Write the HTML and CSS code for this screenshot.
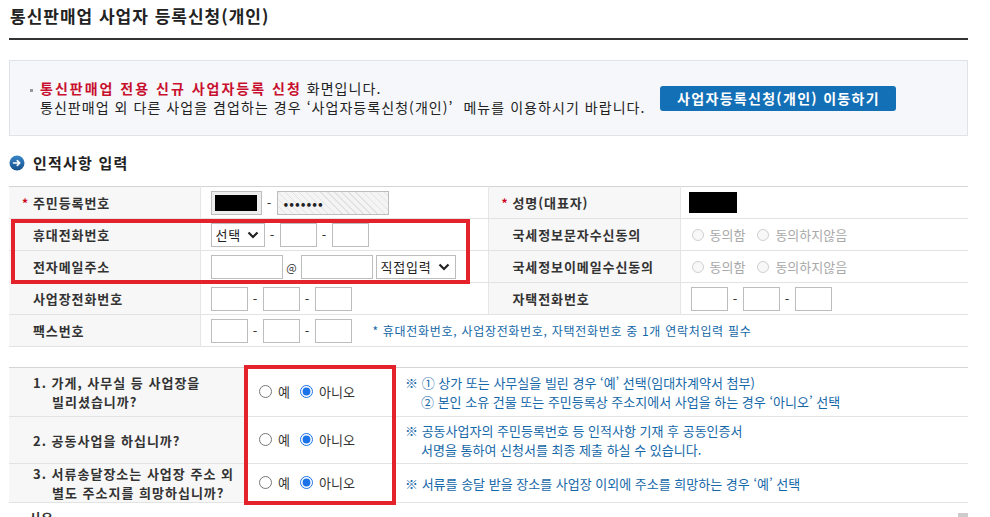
FILE: index.html
```html
<!DOCTYPE html>
<html lang="ko">
<head>
<meta charset="utf-8">
<title>통신판매업 사업자 등록신청(개인)</title>
<link rel="stylesheet" href="styles.css">
</head>
<body>
<div class="page">
  <h1 class="title">통신판매업 사업자 등록신청(개인)</h1>

  <div class="notice">
    <div class="notice-text">
      <p><span class="bullet"></span><strong class="red">통신판매업 전용 신규 사업자등록 신청</strong> 화면입니다.</p>
      <p>통신판매업 외 다른 사업을 겸업하는 경우 ‘사업자등록신청(개인)’&nbsp; 메뉴를 이용하시기 바랍니다.</p>
    </div>
    <a class="btn">사업자등록신청(개인) 이동하기</a>
  </div>

  <h2 class="section">
    <span class="sec-icon"><svg width="16" height="16" viewBox="0 0 16 16"><defs><linearGradient id="g" x1="0" y1="0" x2="0" y2="1"><stop offset="0" stop-color="#3a86c8"/><stop offset="1" stop-color="#15508c"/></linearGradient></defs><circle cx="8" cy="8" r="7.5" fill="url(#g)"/><path d="M4.5 8h6M8.3 5.6L10.8 8 8.3 10.4" stroke="#fff" stroke-width="1.6" fill="none" stroke-linecap="round" stroke-linejoin="round"/></svg></span>
    인적사항 입력
  </h2>

  <div class="form-wrap">
    <table class="form">
      <colgroup><col class="c1"><col class="c2"><col class="c3"><col class="c4"></colgroup>
      <tr>
        <th><span class="star">*</span>주민등록번호</th>
        <td>
          <div class="fields">
            <span class="box gray w51"><span class="mask1"></span></span>
            <span class="dash">-</span>
            <span class="box hatch w112"><span class="dots">•••••••</span></span>
          </div>
        </td>
        <th><span class="star">*</span>성명(대표자)</th>
        <td><span class="mask2"></span></td>
      </tr>
      <tr>
        <th>휴대전화번호</th>
        <td>
          <div class="fields">
            <span class="sel w54">선택<svg class="chev" width="12" height="8" viewBox="0 0 12 8"><path d="M1.5 1.5L6 6l4.5-4.5" stroke="#222" stroke-width="2.2" fill="none"/></svg></span>
            <span class="dash">-</span>
            <span class="box w37"></span>
            <span class="dash">-</span>
            <span class="box w37"></span>
          </div>
        </td>
        <th>국세정보문자수신동의</th>
        <td>
          <div class="radios off">
            <label><input type="radio" disabled>동의함</label>
            <label><input type="radio" disabled>동의하지않음</label>
          </div>
        </td>
      </tr>
      <tr>
        <th>전자메일주소</th>
        <td>
          <div class="fields">
            <span class="box w72"></span>
            <span class="at">@</span>
            <span class="box w72"></span>
            <span class="sel w80 ml3">직접입력<svg class="chev" width="12" height="8" viewBox="0 0 12 8"><path d="M1.5 1.5L6 6l4.5-4.5" stroke="#222" stroke-width="2.2" fill="none"/></svg></span>
          </div>
        </td>
        <th>국세정보이메일수신동의</th>
        <td>
          <div class="radios off">
            <label><input type="radio" disabled>동의함</label>
            <label><input type="radio" disabled>동의하지않음</label>
          </div>
        </td>
      </tr>
      <tr>
        <th>사업장전화번호</th>
        <td>
          <div class="fields">
            <span class="box w37"></span><span class="dash">-</span><span class="box w37"></span><span class="dash">-</span><span class="box w37"></span>
          </div>
        </td>
        <th>자택전화번호</th>
        <td>
          <div class="fields">
            <span class="box w37"></span><span class="dash">-</span><span class="box w37"></span><span class="dash">-</span><span class="box w37"></span>
          </div>
        </td>
      </tr>
      <tr>
        <th>팩스번호</th>
        <td colspan="3">
          <div class="fields">
            <span class="box w37"></span><span class="dash">-</span><span class="box w37"></span><span class="dash">-</span><span class="box w37"></span>
            <span class="hint">* 휴대전화번호, 사업장전화번호, 자택전화번호 중 1개 연락처입력 필수</span>
          </div>
        </td>
      </tr>
    </table>
    <div class="hl hl1"></div>
  </div>

  <div class="q-wrap">
    <table class="q">
      <colgroup><col class="q1"><col class="q2"><col class="q3"></colgroup>
      <tr class="r1">
        <th><span class="ql">1. 가게, 사무실 등 사업장을</span><span class="ql ind">빌리셨습니까?</span></th>
        <td class="yn"><label><input type="radio" name="a">예</label><label><input type="radio" name="a" checked>아니오</label></td>
        <td class="note">※ ① 상가 또는 사무실을 빌린 경우 ‘예’ 선택(임대차계약서 첨부)<br><span class="ind2">② 본인 소유 건물 또는 주민등록상 주소지에서 사업을 하는 경우 ‘아니오’ 선택</span></td>
      </tr>
      <tr class="r2">
        <th><span class="ql">2. 공동사업을 하십니까?</span></th>
        <td class="yn"><label><input type="radio" name="b">예</label><label><input type="radio" name="b" checked>아니오</label></td>
        <td class="note">※ 공동사업자의 주민등록번호 등 인적사항 기재 후 공동인증서<br><span class="ind3">서명을 통하여 신청서를 최종 제출 하실 수 있습니다.</span></td>
      </tr>
      <tr class="r3">
        <th><span class="ql">3. 서류송달장소는 사업장 주소 외</span><span class="ql ind">별도 주소지를 희망하십니까?</span></th>
        <td class="yn"><label><input type="radio" name="c">예</label><label><input type="radio" name="c" checked>아니오</label></td>
        <td class="note">※ 서류를 송달 받을 장소를 사업장 이외에 주소를 희망하는 경우 ‘예’ 선택</td>
      </tr>
    </table>
    <div class="hl hl2"></div>
  </div>

  <div class="next"><span class="next-text">사유</span><span class="next-btn"></span></div>
</div>
</body>
</html>
```

FILE: styles.css
```css
* { box-sizing: border-box; }
html, body { margin: 0; padding: 0; background: #fff; }
body {
  font-family: "Noto Sans CJK KR", "Noto Sans", sans-serif;
  color: #333;
  font-size: 13px;
  overflow: hidden;
}
.page {
  width: 959px;
  margin-left: 9px;
}
.title {
  margin: 0;
  font-size: 17px;
  font-weight: bold;
  color: #222;
  line-height: 31px;
  height: 40px;
  padding-left: 1px;
  border-bottom: 2px solid #333;
  letter-spacing: 1px;
}

/* notice */
.notice {
  margin-top: 20px;
  height: 76px;
  border: 1px solid #dfe2e8;
  background: #f5f7fb;
  display: flex;
  align-items: center;
  padding-left: 30px;
}
.notice-text p {
  margin: 0;
  font-size: 14px;
  line-height: 19px;
  color: #222;
  letter-spacing: 1.05px;
  white-space: nowrap;
}
.bullet {
  display: inline-block;
  width: 3px;
  height: 3px;
  background: #999;
  margin-left: -10px;
  margin-right: 7px;
  vertical-align: middle;
}
.red { color: #c8102e; letter-spacing: 2px; }
.btn {
  flex: none;
  margin-left: 15px;
  width: 236px;
  height: 25px;
  border-radius: 3px;
  background: #1470b6;
  color: #fff;
  font-weight: bold;
  font-size: 14px;
  line-height: 25px;
  text-align: center;
  letter-spacing: 1.3px;
}

/* section */
.section {
  margin: 17px 0 13px;
  height: 20px;
  display: flex;
  align-items: center;
  gap: 8px;
  font-size: 15px;
  font-weight: bold;
  color: #222;
  line-height: 20px;
  letter-spacing: 1.2px;
}
.sec-icon { display: flex; }

/* form table */
.form-wrap, .q-wrap { position: relative; }
table { border-collapse: collapse; width: 959px; table-layout: fixed; }
.form { border-top: 1px solid #d4d4d4; border-bottom: 1px solid #d4d4d4; }
.c1 { width: 191px; } .c2 { width: 288px; } .c3 { width: 192px; } .c4 { width: 288px; }
.form tr { height: 32px; }
.form th, .form td {
  border-bottom: 1px solid #e3e3e3;
  border-left: 1px solid #e6e6e6;
  padding: 0;
  vertical-align: middle;
}
.form th:first-child { border-left: 0; }
.form th {
  background: #f7f7f7;
  text-align: left;
  padding-left: 24px;
  font-weight: bold;
  font-size: 13px;
  color: #333;
  letter-spacing: 0.9px;
}
.star {
  display: inline-block;
  width: 10px;
  margin-left: -11px;
  margin-right: 1px;
  color: #d0021b;
  font-size: 12px;
  letter-spacing: 0;
}
.form td { padding-left: 10px; background: #fff; }
.fields { display: flex; align-items: center; }
.box {
  display: inline-flex;
  align-items: center;
  height: 24px;
  border: 1px solid #bdbdbd;
  background: #fff;
}
.w37 { width: 37px; } .w51 { width: 51px; } .w72 { width: 72px; } .w112 { width: 112px; }
.w54 { width: 54px; } .w80 { width: 80px; }
.ml3 { margin-left: 3px; }
.gray { background: #eeeeee; justify-content: center; }
.mask1 { width: 42px; height: 16px; background: #000; }
.mask2 { display: block; width: 48px; height: 21px; background: #000; margin-left: -2px; }
.hatch {
  background: repeating-linear-gradient(45deg, #e2e2e2 0 1px, #f4f4f4 1px 5px);
  padding-left: 6px;
}
.dots { font-size: 14px; color: #222; letter-spacing: 1px; }
.dash {
  width: 15px;
  text-align: center;
  color: #333;
  font-size: 13px;
}
.at { width: 18px; text-align: center; font-size: 11px; color: #333; }
.sel {
  display: inline-flex;
  align-items: center;
  justify-content: space-between;
  height: 24px;
  border: 1px solid #bdbdbd;
  background: #fff;
  padding: 0 5px 0 4px;
  font-size: 13px;
  color: #222;
  letter-spacing: 0.8px;
}
.chev { flex: none; }
.hint {
  margin-left: 21px;
  color: #1467a8;
  font-size: 12px;
  letter-spacing: 0.7px;
}
.radios { display: flex; align-items: center; gap: 11px; }
.radios label { display: inline-flex; align-items: center; font-size: 13px; }
.radios.off label { color: #a8a8a8; }
.radios input { margin: 0 6px 0 1px; width: 12px; height: 12px; }

/* highlight boxes */
.hl { position: absolute; border: 4px solid #e3222b; pointer-events: none; }
.hl1 { left: 2px; top: 33px; width: 459px; height: 65px; }
.hl2 { left: 235px; top: -2px; width: 152px; height: 140px; }

/* questions table */
.q-wrap { margin-top: 20px; }
.q { border-top: 1px solid #d4d4d4; border-bottom: 1px solid #d4d4d4; }
.q1 { width: 236px; } .q2 { width: 150px; } .q3 { width: 573px; }
.q th, .q td {
  border-bottom: 1px solid #e3e3e3;
  padding: 0;
  vertical-align: middle;
}
.q tr.r1 { height: 49px; }
.q tr.r2 { height: 47px; }
.q tr.r3 { height: 39px; }
.q th {
  background: #f7f7f7;
  text-align: left;
  padding-left: 24px;
  font-weight: bold;
  font-size: 13px;
  color: #333;
  letter-spacing: 1px;
}
.ql { display: block; height: 19px; line-height: 19px; }
.ind { padding-left: 19px; }
.q td.yn { padding-left: 13px; }
.yn label { display: inline-flex; align-items: center; font-size: 13px; color: #333; margin-right: 9px; }
.yn input { margin: 0 6px 0 1px; width: 13px; height: 13px; accent-color: #1a73e8; }
.note {
  padding-left: 10px !important;
  color: #1467a8;
  font-size: 13px;
  line-height: 19px;
}
.ind2 { padding-left: 16px; }
.ind3 { padding-left: 16px; }

.next {
  margin-top: 7px;
  height: 20px;
  display: flex;
  justify-content: space-between;
  align-items: flex-start;
}
.next-text { padding-left: 20px; font-size: 13px; font-weight: bold; color: #333; line-height: 16px; }
.next-btn { width: 10px; height: 6px; margin-top: 3px; background: #ccc; }
```
